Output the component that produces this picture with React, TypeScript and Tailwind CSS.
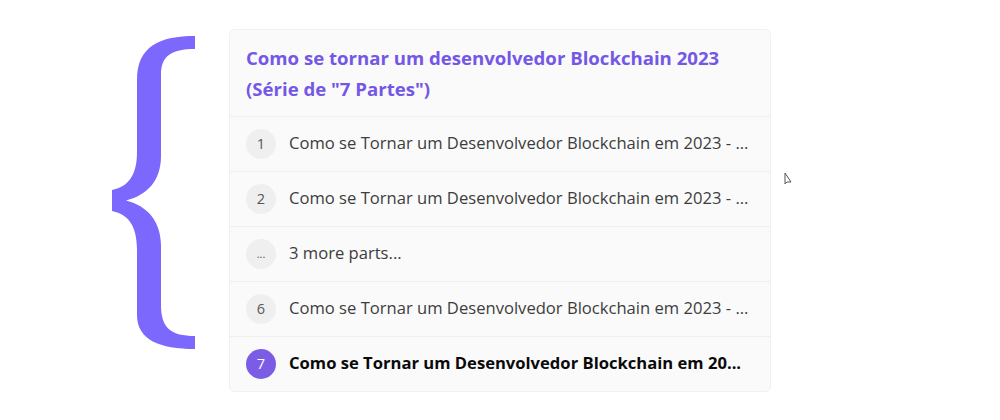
import React from 'react';

interface Part {
  num: string;
  title: string;
  current?: boolean;
}

const parts: Part[] = [
  { num: '1', title: 'Como se Tornar um Desenvolvedor Blockchain em 2023 - ...' },
  { num: '2', title: 'Como se Tornar um Desenvolvedor Blockchain em 2023 - ...' },
  { num: '...', title: '3 more parts...' },
  { num: '6', title: 'Como se Tornar um Desenvolvedor Blockchain em 2023 - ...' },
  { num: '7', title: 'Como se Tornar um Desenvolvedor Blockchain em 20...', current: true },
];

const Brace: React.FC = () => (
  <svg width="100" height="330" viewBox="100 30 100 330" className="shrink-0 mt-[30px] ml-[100px]">
    <path
      fill="#7c68fc"
      d="M195 36 C160 36 137 46 137 80 L137 152 C137 177 127 187 112 190 L112 211 C127 214 137 224 137 250 L137 315 C137 340 160 349 195 349 L195 336 C171 336 161 328 161 305 L161 246 C161 222 148 206 126 200.5 C148 195 161 180 161 156 L161 75 C161 56 171 49 195 49 Z"
    />
  </svg>
);

const Row: React.FC<{ part: Part }> = ({ part }) => (
  <div className="flex items-center gap-[13px] px-4 py-3 border-t border-[#efefef]">
    <span
      className={`shrink-0 w-[30px] h-[30px] rounded-full flex items-center justify-center ${
        part.current ? 'bg-[#7b5ce5] text-white' : 'bg-[#efefef] text-[#575757]'
      } ${part.num === '...' ? 'text-[11px]' : 'text-[14.5px]'}`}
    >
      {part.num}
    </span>
    <span
      className={`whitespace-nowrap text-[16.6px] leading-[24px] -mt-[2px] ${
        part.current ? 'font-bold text-[#0a0a0a]' : 'text-[#3d3d3d]'
      }`}
    >
      {part.title}
    </span>
  </div>
);

export default function App() {
  return (
    <div
      className="w-[1000px] h-[420px] bg-white flex items-start"
      style={{ fontFamily: '"Open Sans", "Noto Sans", sans-serif' }}
    >
      <Brace />
      <div className="ml-[29px] mt-[29px] w-[542px] bg-[#fafafa] border border-[#f0f0f0] rounded-md">
        <h2 className="px-4 pt-3 pb-3 text-[18.6px] leading-[31px] font-bold text-[#7457e6]">
          Como se tornar um desenvolvedor Blockchain 2023 (Série de "7 Partes")
        </h2>
        {parts.map((p) => (
          <Row key={p.num} part={p} />
        ))}
      </div>
      <svg width="8" height="14" viewBox="0 0 8 14" className="ml-[13px] mt-[172px]">
        <path d="M1 1 L1 12 L3 10 L7 10 Z" fill="white" stroke="#555" strokeWidth="1" />
      </svg>
    </div>
  );
}
